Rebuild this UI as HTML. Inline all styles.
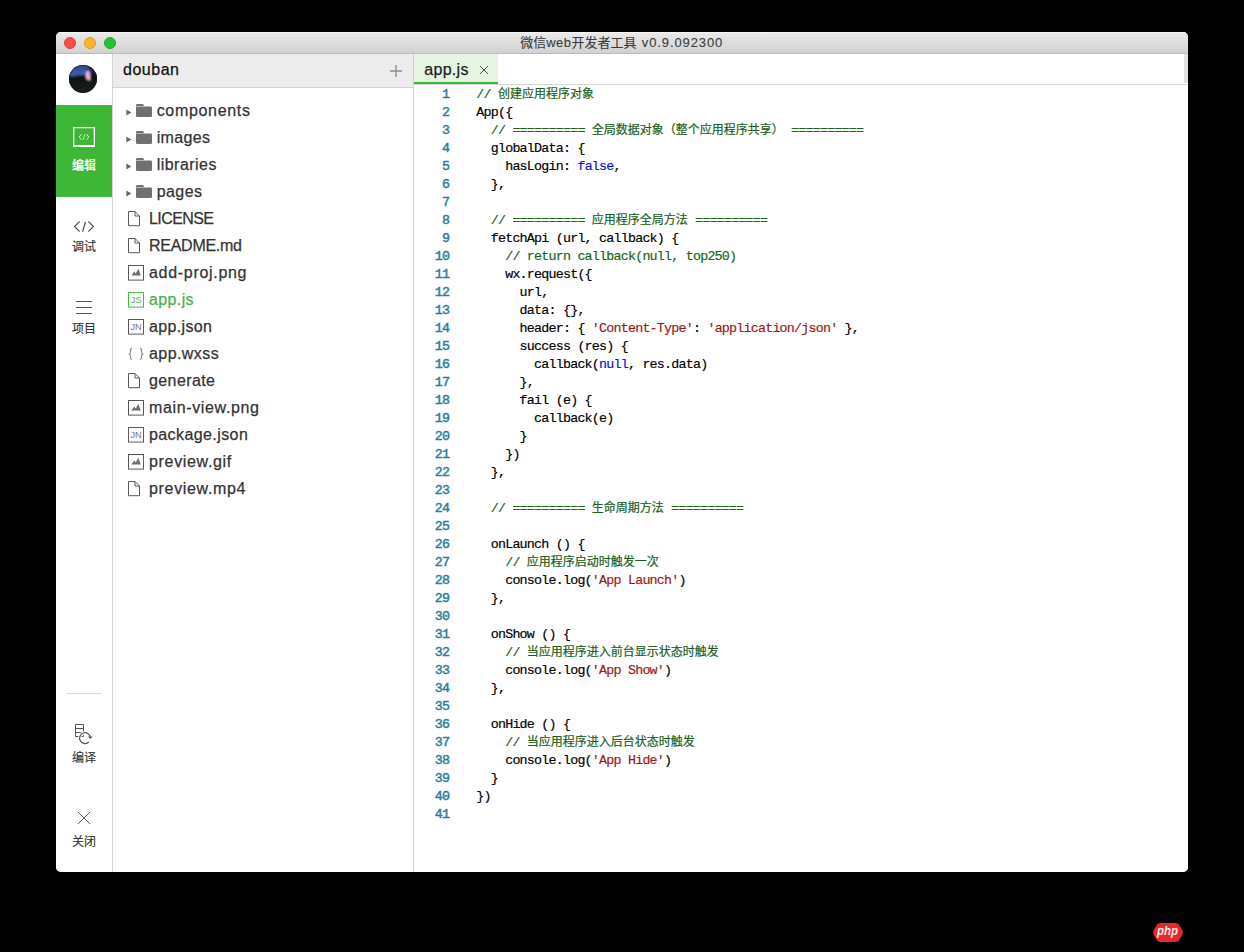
<!DOCTYPE html><html><head><meta charset="utf-8"><title>app.js</title><style>
*{box-sizing:border-box;margin:0;padding:0}
html,body{width:1244px;height:952px;background:#000;overflow:hidden}
body{position:relative;font-family:"Liberation Sans",sans-serif;color:#333}
.abs{position:absolute}
#win{position:absolute;left:56px;top:32px;width:1132px;height:840px;background:#fff;border-radius:5px;overflow:hidden}
#title{position:absolute;left:0;top:0;width:1132px;height:22px;background:linear-gradient(#ececec,#e6e6e6 15%,#d1d1d1);border-bottom:1px solid #bcbcbc;box-shadow:inset 0 1px 0 #f4f4f4}
.tl{position:absolute;top:5px;width:12px;height:12px;border-radius:50%}
#side{position:absolute;left:0;top:22px;width:56px;height:818px;background:#fff}
#sideb{position:absolute;left:56px;top:22px;width:1px;height:818px;background:#d4d4d4}
#files{position:absolute;left:57px;top:22px;width:300px;height:818px;background:#fff}
#fhead{position:absolute;left:0;top:0;width:300px;height:34px;background:#ececec;border-bottom:1px solid #d2d2d2}
#fdiv{position:absolute;left:357px;top:22px;width:1px;height:818px;background:#d0d0d0}
#ed{position:absolute;left:358px;top:22px;width:774px;height:818px;background:#fff}
.lbl{position:absolute;-webkit-text-stroke:0.25px;font-size:16px;line-height:20px;white-space:pre;color:#333}
.code{position:absolute;-webkit-text-stroke:0.18px;font-family:"Liberation Mono",monospace;white-space:pre;color:#000}
.ln{position:absolute;-webkit-text-stroke:0.45px;font-family:"Liberation Mono",monospace;white-space:pre;color:#2a7d9b;text-align:right}
.c{color:#166516}.k{color:#1010c8}.s{color:#9c1818}
.cj{display:inline-block;font-family:"Liberation Mono","Noto Sans CJK SC",monospace;font-size:12px;letter-spacing:0;color:#1b5e1b;-webkit-text-stroke:0.2px;white-space:nowrap;overflow:visible}
.tcj{display:inline-block;font-family:"Liberation Sans","Noto Sans CJK SC",sans-serif;font-size:13px;letter-spacing:0;color:#3a3a3a;white-space:nowrap}
.scj{display:block;width:24px;height:12px;font-family:"Liberation Sans","Noto Sans CJK SC",sans-serif;font-size:12px;line-height:12px;letter-spacing:0;color:#333;white-space:nowrap;-webkit-text-stroke:0.15px}
</style></head><body><div id="win"><div id="title"><div class="tl" style="left:8px;background:#fd4b48;border:0.5px solid #dc3e3a"></div><div class="tl" style="left:28px;background:#fdb425;border:0.5px solid #de9a20"></div><div class="tl" style="left:48px;background:#27c232;border:0.5px solid #1fa62a"></div><div class="abs" id="ttext" style="left:464.3px;top:3px;height:16px;line-height:16px;font-size:13px;color:#3a3a3a;-webkit-text-stroke:0.1px;white-space:nowrap"><span class="tcj" style="width:26px">微信</span><span style="letter-spacing:0.426px">web</span><span class="tcj" style="width:65px">开发者工具</span><span style="letter-spacing:0.884px;margin-left:5.4px">v0.9.092300</span></div></div><div id="side"><svg class="abs" style="left:13px;top:11px" width="28" height="28" viewBox="0 0 28 28"><defs><clipPath id="avc"><circle cx="14" cy="14" r="14"/></clipPath><filter id="avb" x="-20%" y="-20%" width="140%" height="140%"><feGaussianBlur stdDeviation="1"/></filter><linearGradient id="avs" x1="0" y1="0" x2="0" y2="1"><stop offset="0" stop-color="#2b3d88"/><stop offset="1" stop-color="#4464b4"/></linearGradient></defs><g clip-path="url(#avc)"><rect width="28" height="28" fill="#161a17"/><g filter="url(#avb)"><path d="M-2 -2H30V10L21 9.6L12 10.2L4 11L-2 11.6Z" fill="url(#avs)"/><path d="M20 -2H30V10H20.5Z" fill="#24184a"/><path d="M-2 11.6L4 11L12 10.2L21 9.6L30 10V17H-2Z" fill="#10160f"/><path d="M17.8 6C19.4 5.2 21 6.4 20.8 8.6C20.7 10.4 21.6 12.8 21 15C19.4 15.8 17.4 14.2 17 12C16.7 10 16.8 7.8 17.8 6Z" fill="#f2b8e0"/><path d="M17.6 3.6C18.8 2.6 20.8 3.2 20.6 5.4L18 6.2Z" fill="#3a1c50"/></g></g><circle cx="14" cy="14" r="13.6" fill="none" stroke="#10131a" stroke-opacity=".55" stroke-width=".9"/></svg><div class="abs" style="left:0;top:51px;width:56px;height:92px;background:#3db735"></div><svg class="abs" style="left:16px;top:72px" width="24" height="22" viewBox="0 0 24 22"><path fill-rule="evenodd" fill="#fff" d="M1 1H23V21.1H1ZM2.3 2.2V19.1H21.7V2.2Z"/><path d="M9.6 8.1L7.2 11L9.6 13.9M14.4 8.1L16.8 11L14.4 13.9M12.9 8L11.1 14" fill="none" stroke="#d6f5d0" stroke-width="1" stroke-opacity=".9"/></svg><div class="abs" style="left:16px;top:106px;height:12px;line-height:0"><span class="scj" style="color:#fff;font-weight:bold;-webkit-text-stroke:0">编辑</span></div><svg class="abs" style="left:17px;top:166px" width="22" height="14" viewBox="0 0 22 14" fill="none" stroke="#555" stroke-width="1.25"><path d="M6.6 1.4L1.6 6.5L6.6 11.6M15.4 1.4L20.4 6.5L15.4 11.6M12.5 2L9.6 11.7"/></svg><div class="abs" style="left:16px;top:187px;height:12px;line-height:0"><span class="scj">调试</span></div><div class="abs" style="left:20px;top:247px;width:16px;height:1px;background:#555"></div><div class="abs" style="left:20px;top:253px;width:16px;height:1px;background:#555"></div><div class="abs" style="left:20px;top:259px;width:16px;height:1px;background:#555"></div><div class="abs" style="left:16px;top:268.5px;height:12px;line-height:0"><span class="scj">项目</span></div><div class="abs" style="left:10px;top:639px;width:36px;height:1px;background:#dcdcdc"></div><svg class="abs" style="left:17px;top:668px" width="22" height="24" viewBox="0 0 22 24" fill="none" stroke="#555" stroke-width="1"><path d="M2.5 2.5H10.5V14.5H2.5ZM2.5 6.5H10.5M2.5 10.5H10.5"/><circle cx="12" cy="16.2" r="5.3" stroke="#fff" stroke-width="3.2"/><path d="M15.8 20A5.4 5.4 0 1 1 17.4 15.8" stroke-width="1.25"/><path d="M14.9 14.6L17.5 17L19.7 14.4Z" fill="#555" stroke="none"/></svg><div class="abs" style="left:16px;top:697.5px;height:12px;line-height:0"><span class="scj">编译</span></div><svg class="abs" style="left:21px;top:757px" width="14" height="14" viewBox="0 0 14 14" stroke="#555" stroke-width="1"><path d="M1 1L13 13M13 1L1 13"/></svg><div class="abs" style="left:16px;top:782px;height:12px;line-height:0"><span class="scj">关闭</span></div></div><div id="sideb"></div><div id="files"><div id="fhead"></div><div class="lbl" style="left:10.00px;top:5.76px;font-size:16px;letter-spacing:0.522px;color:#111">douban</div><svg class="abs" style="left:276px;top:10px" width="14" height="14" viewBox="0 0 14 14" stroke="#8a8a8a" stroke-width="1.3"><path d="M7 1V13M1 7H13"/></svg><svg class="abs" style="left:13.200000000000003px;top:54.8px" width="6" height="7" viewBox="0 0 6 7"><path d="M.3 .4L5.4 3.5L.3 6.6Z" fill="#6a6a6a"/></svg><svg class="abs" style="left:23px;top:50.0px" width="16" height="13" viewBox="0 0 16 13"><path d="M0 1.2Q0 0 1.2 0H6.3Q7.2 0 7.6 .8L8.2 2H0Z" fill="#707070"/><path d="M0 2.6H14.8Q16 2.6 16 3.8V11.8Q16 13 14.8 13H1.2Q0 13 0 11.8Z" fill="#707070"/></svg><div class="lbl" style="left:43.70px;top:46.86px;font-size:16px;letter-spacing:0.682px;color:#333">components</div><svg class="abs" style="left:13.200000000000003px;top:81.8px" width="6" height="7" viewBox="0 0 6 7"><path d="M.3 .4L5.4 3.5L.3 6.6Z" fill="#6a6a6a"/></svg><svg class="abs" style="left:23px;top:77.0px" width="16" height="13" viewBox="0 0 16 13"><path d="M0 1.2Q0 0 1.2 0H6.3Q7.2 0 7.6 .8L8.2 2H0Z" fill="#707070"/><path d="M0 2.6H14.8Q16 2.6 16 3.8V11.8Q16 13 14.8 13H1.2Q0 13 0 11.8Z" fill="#707070"/></svg><div class="lbl" style="left:43.70px;top:73.86px;font-size:16px;letter-spacing:0.364px;color:#333">images</div><svg class="abs" style="left:13.200000000000003px;top:108.8px" width="6" height="7" viewBox="0 0 6 7"><path d="M.3 .4L5.4 3.5L.3 6.6Z" fill="#6a6a6a"/></svg><svg class="abs" style="left:23px;top:104.0px" width="16" height="13" viewBox="0 0 16 13"><path d="M0 1.2Q0 0 1.2 0H6.3Q7.2 0 7.6 .8L8.2 2H0Z" fill="#707070"/><path d="M0 2.6H14.8Q16 2.6 16 3.8V11.8Q16 13 14.8 13H1.2Q0 13 0 11.8Z" fill="#707070"/></svg><div class="lbl" style="left:43.70px;top:100.86px;font-size:16px;letter-spacing:0.473px;color:#333">libraries</div><svg class="abs" style="left:13.200000000000003px;top:135.8px" width="6" height="7" viewBox="0 0 6 7"><path d="M.3 .4L5.4 3.5L.3 6.6Z" fill="#6a6a6a"/></svg><svg class="abs" style="left:23px;top:131.0px" width="16" height="13" viewBox="0 0 16 13"><path d="M0 1.2Q0 0 1.2 0H6.3Q7.2 0 7.6 .8L8.2 2H0Z" fill="#707070"/><path d="M0 2.6H14.8Q16 2.6 16 3.8V11.8Q16 13 14.8 13H1.2Q0 13 0 11.8Z" fill="#707070"/></svg><div class="lbl" style="left:43.70px;top:127.86px;font-size:16px;letter-spacing:0.426px;color:#333">pages</div><svg class="abs" style="left:15px;top:156.8px" width="12" height="16" viewBox="0 0 12 16" fill="none" stroke="#585858" stroke-width="1"><path d="M.5 .5H7L11.5 5V14.7H.5Z"/><path d="M7 .5V5H11.5"/></svg><div class="lbl" style="left:36.00px;top:154.86px;font-size:16px;letter-spacing:-0.579px;color:#333">LICENSE</div><svg class="abs" style="left:15px;top:183.8px" width="12" height="16" viewBox="0 0 12 16" fill="none" stroke="#585858" stroke-width="1"><path d="M.5 .5H7L11.5 5V14.7H.5Z"/><path d="M7 .5V5H11.5"/></svg><div class="lbl" style="left:36.00px;top:181.86px;font-size:16px;letter-spacing:-0.266px;color:#333">README.md</div><svg class="abs" style="left:15px;top:211.1px" width="16" height="16" viewBox="0 0 16 16"><rect x=".5" y=".5" width="15" height="14.6" fill="none" stroke="#585858"/><path d="M3.4 10.4L6.3 6.6L7.8 8.6L10.3 3.8L12.8 10.4Z" fill="#6e6e6e"/></svg><div class="lbl" style="left:36.00px;top:208.86px;font-size:16px;letter-spacing:0.696px;color:#333">add-proj.png</div><svg class="abs" style="left:15px;top:238.1px" width="16" height="16" viewBox="0 0 16 16"><rect x=".5" y=".5" width="15" height="14.6" fill="none" stroke="#4cb848"/><text x="8.1" y="11.1" text-anchor="middle" font-family="Liberation Sans, sans-serif" font-size="9" fill="#5ab45a" textLength="11.2" lengthAdjust="spacingAndGlyphs">JS</text></svg><div class="lbl" style="left:36.00px;top:235.86px;font-size:16px;letter-spacing:0.381px;color:#52ac52">app.js</div><svg class="abs" style="left:15px;top:265.1px" width="16" height="16" viewBox="0 0 16 16"><rect x=".5" y=".5" width="15" height="14.6" fill="none" stroke="#5a5a5a"/><text x="8.1" y="11.1" text-anchor="middle" font-family="Liberation Sans, sans-serif" font-size="9" fill="#777" textLength="11.2" lengthAdjust="spacingAndGlyphs">JN</text></svg><div class="lbl" style="left:36.00px;top:262.86px;font-size:16px;letter-spacing:0.358px;color:#333">app.json</div><svg class="abs" style="left:15px;top:294.3px" width="16" height="12" viewBox="0 0 16 12" fill="none" stroke="#858585" stroke-width="1.1"><path d="M4 .6C2.7 .6 2.5 1.2 2.5 2.2V4.3C2.5 5.2 2.1 5.7 .8 6C2.1 6.3 2.5 6.8 2.5 7.7V9.8C2.5 10.8 2.7 11.4 4 11.4M12 .6C13.3 .6 13.5 1.2 13.5 2.2V4.3C13.5 5.2 13.9 5.7 15.2 6C13.9 6.3 13.5 6.8 13.5 7.7V9.8C13.5 10.8 13.3 11.4 12 11.4"/></svg><div class="lbl" style="left:36.00px;top:289.86px;font-size:16px;letter-spacing:0.429px;color:#333">app.wxss</div><svg class="abs" style="left:15px;top:318.8px" width="12" height="16" viewBox="0 0 12 16" fill="none" stroke="#585858" stroke-width="1"><path d="M.5 .5H7L11.5 5V14.7H.5Z"/><path d="M7 .5V5H11.5"/></svg><div class="lbl" style="left:36.00px;top:316.86px;font-size:16px;letter-spacing:0.405px;color:#333">generate</div><svg class="abs" style="left:15px;top:346.1px" width="16" height="16" viewBox="0 0 16 16"><rect x=".5" y=".5" width="15" height="14.6" fill="none" stroke="#585858"/><path d="M3.4 10.4L6.3 6.6L7.8 8.6L10.3 3.8L12.8 10.4Z" fill="#6e6e6e"/></svg><div class="lbl" style="left:36.00px;top:343.86px;font-size:16px;letter-spacing:0.644px;color:#333">main-view.png</div><svg class="abs" style="left:15px;top:373.1px" width="16" height="16" viewBox="0 0 16 16"><rect x=".5" y=".5" width="15" height="14.6" fill="none" stroke="#5a5a5a"/><text x="8.1" y="11.1" text-anchor="middle" font-family="Liberation Sans, sans-serif" font-size="9" fill="#777" textLength="11.2" lengthAdjust="spacingAndGlyphs">JN</text></svg><div class="lbl" style="left:36.00px;top:370.86px;font-size:16px;letter-spacing:0.410px;color:#333">package.json</div><svg class="abs" style="left:15px;top:400.1px" width="16" height="16" viewBox="0 0 16 16"><rect x=".5" y=".5" width="15" height="14.6" fill="none" stroke="#585858"/><path d="M3.4 10.4L6.3 6.6L7.8 8.6L10.3 3.8L12.8 10.4Z" fill="#6e6e6e"/></svg><div class="lbl" style="left:36.00px;top:397.86px;font-size:16px;letter-spacing:0.670px;color:#333">preview.gif</div><svg class="abs" style="left:15px;top:426.8px" width="12" height="16" viewBox="0 0 12 16" fill="none" stroke="#585858" stroke-width="1"><path d="M.5 .5H7L11.5 5V14.7H.5Z"/><path d="M7 .5V5H11.5"/></svg><div class="lbl" style="left:36.00px;top:424.86px;font-size:16px;letter-spacing:0.668px;color:#333">preview.mp4</div></div><div id="fdiv"></div><div id="ed"><div class="abs" style="left:0;top:30px;width:774px;height:1px;background:#d6d6d6"></div><div class="abs" style="left:0;top:0;width:84px;height:30px;background:#e5f5e2;border-bottom:2px solid #3db735"></div><div class="abs" style="left:770px;top:0;width:4px;height:29px;background:#e2e2e2"></div><div class="lbl" style="left:10.20px;top:5.56px;font-size:16px;letter-spacing:0.321px;color:#222">app.js</div><svg class="abs" style="left:65px;top:11px" width="10" height="10" viewBox="0 0 10 10" stroke="#555" stroke-width="1"><path d="M1 1L9 9M9 1L1 9"/></svg><div class="ln" style="left:0;top:32.2px;width:35.22px;height:18px;line-height:18px;font-size:13.3333px;letter-spacing:-0.777px">1</div><div class="code" style="left:62.30px;top:32.2px;height:18px;line-height:18px;font-size:13.3333px;letter-spacing:-0.777px"><span class="c">// </span><span class="cj" style="width:96px">创建应用程序对象</span></div><div class="ln" style="left:0;top:50.2px;width:35.22px;height:18px;line-height:18px;font-size:13.3333px;letter-spacing:-0.777px">2</div><div class="code" style="left:62.30px;top:50.2px;height:18px;line-height:18px;font-size:13.3333px;letter-spacing:-0.777px">App({</div><div class="ln" style="left:0;top:68.2px;width:35.22px;height:18px;line-height:18px;font-size:13.3333px;letter-spacing:-0.777px">3</div><div class="code" style="left:62.30px;top:68.2px;height:18px;line-height:18px;font-size:13.3333px;letter-spacing:-0.777px"><span class="c">  // ========== </span><span class="cj" style="width:192px">全局数据对象（整个应用程序共享）</span><span class="c"> ==========</span></div><div class="ln" style="left:0;top:86.19999999999999px;width:35.22px;height:18px;line-height:18px;font-size:13.3333px;letter-spacing:-0.777px">4</div><div class="code" style="left:62.30px;top:86.19999999999999px;height:18px;line-height:18px;font-size:13.3333px;letter-spacing:-0.777px">  globalData: {</div><div class="ln" style="left:0;top:104.19999999999999px;width:35.22px;height:18px;line-height:18px;font-size:13.3333px;letter-spacing:-0.777px">5</div><div class="code" style="left:62.30px;top:104.19999999999999px;height:18px;line-height:18px;font-size:13.3333px;letter-spacing:-0.777px">    hasLogin: <span class="k">false</span>,</div><div class="ln" style="left:0;top:122.19999999999999px;width:35.22px;height:18px;line-height:18px;font-size:13.3333px;letter-spacing:-0.777px">6</div><div class="code" style="left:62.30px;top:122.19999999999999px;height:18px;line-height:18px;font-size:13.3333px;letter-spacing:-0.777px">  },</div><div class="ln" style="left:0;top:140.2px;width:35.22px;height:18px;line-height:18px;font-size:13.3333px;letter-spacing:-0.777px">7</div><div class="ln" style="left:0;top:158.2px;width:35.22px;height:18px;line-height:18px;font-size:13.3333px;letter-spacing:-0.777px">8</div><div class="code" style="left:62.30px;top:158.2px;height:18px;line-height:18px;font-size:13.3333px;letter-spacing:-0.777px"><span class="c">  // ========== </span><span class="cj" style="width:96px">应用程序全局方法</span><span class="c"> ==========</span></div><div class="ln" style="left:0;top:176.2px;width:35.22px;height:18px;line-height:18px;font-size:13.3333px;letter-spacing:-0.777px">9</div><div class="code" style="left:62.30px;top:176.2px;height:18px;line-height:18px;font-size:13.3333px;letter-spacing:-0.777px">  fetchApi (url, callback) {</div><div class="ln" style="left:0;top:194.2px;width:35.22px;height:18px;line-height:18px;font-size:13.3333px;letter-spacing:-0.777px">10</div><div class="code" style="left:62.30px;top:194.2px;height:18px;line-height:18px;font-size:13.3333px;letter-spacing:-0.777px"><span class="c">    // return callback(null, top250)</span></div><div class="ln" style="left:0;top:212.2px;width:35.22px;height:18px;line-height:18px;font-size:13.3333px;letter-spacing:-0.777px">11</div><div class="code" style="left:62.30px;top:212.2px;height:18px;line-height:18px;font-size:13.3333px;letter-spacing:-0.777px">    wx.request({</div><div class="ln" style="left:0;top:230.2px;width:35.22px;height:18px;line-height:18px;font-size:13.3333px;letter-spacing:-0.777px">12</div><div class="code" style="left:62.30px;top:230.2px;height:18px;line-height:18px;font-size:13.3333px;letter-spacing:-0.777px">      url,</div><div class="ln" style="left:0;top:248.2px;width:35.22px;height:18px;line-height:18px;font-size:13.3333px;letter-spacing:-0.777px">13</div><div class="code" style="left:62.30px;top:248.2px;height:18px;line-height:18px;font-size:13.3333px;letter-spacing:-0.777px">      data: {},</div><div class="ln" style="left:0;top:266.2px;width:35.22px;height:18px;line-height:18px;font-size:13.3333px;letter-spacing:-0.777px">14</div><div class="code" style="left:62.30px;top:266.2px;height:18px;line-height:18px;font-size:13.3333px;letter-spacing:-0.777px">      header: { <span class="s">&#x27;Content-Type&#x27;</span>: <span class="s">&#x27;application/json&#x27;</span> },</div><div class="ln" style="left:0;top:284.2px;width:35.22px;height:18px;line-height:18px;font-size:13.3333px;letter-spacing:-0.777px">15</div><div class="code" style="left:62.30px;top:284.2px;height:18px;line-height:18px;font-size:13.3333px;letter-spacing:-0.777px">      success (res) {</div><div class="ln" style="left:0;top:302.2px;width:35.22px;height:18px;line-height:18px;font-size:13.3333px;letter-spacing:-0.777px">16</div><div class="code" style="left:62.30px;top:302.2px;height:18px;line-height:18px;font-size:13.3333px;letter-spacing:-0.777px">        callback(<span class="k">null</span>, res.data)</div><div class="ln" style="left:0;top:320.2px;width:35.22px;height:18px;line-height:18px;font-size:13.3333px;letter-spacing:-0.777px">17</div><div class="code" style="left:62.30px;top:320.2px;height:18px;line-height:18px;font-size:13.3333px;letter-spacing:-0.777px">      },</div><div class="ln" style="left:0;top:338.2px;width:35.22px;height:18px;line-height:18px;font-size:13.3333px;letter-spacing:-0.777px">18</div><div class="code" style="left:62.30px;top:338.2px;height:18px;line-height:18px;font-size:13.3333px;letter-spacing:-0.777px">      fail (e) {</div><div class="ln" style="left:0;top:356.2px;width:35.22px;height:18px;line-height:18px;font-size:13.3333px;letter-spacing:-0.777px">19</div><div class="code" style="left:62.30px;top:356.2px;height:18px;line-height:18px;font-size:13.3333px;letter-spacing:-0.777px">        callback(e)</div><div class="ln" style="left:0;top:374.2px;width:35.22px;height:18px;line-height:18px;font-size:13.3333px;letter-spacing:-0.777px">20</div><div class="code" style="left:62.30px;top:374.2px;height:18px;line-height:18px;font-size:13.3333px;letter-spacing:-0.777px">      }</div><div class="ln" style="left:0;top:392.2px;width:35.22px;height:18px;line-height:18px;font-size:13.3333px;letter-spacing:-0.777px">21</div><div class="code" style="left:62.30px;top:392.2px;height:18px;line-height:18px;font-size:13.3333px;letter-spacing:-0.777px">    })</div><div class="ln" style="left:0;top:410.2px;width:35.22px;height:18px;line-height:18px;font-size:13.3333px;letter-spacing:-0.777px">22</div><div class="code" style="left:62.30px;top:410.2px;height:18px;line-height:18px;font-size:13.3333px;letter-spacing:-0.777px">  },</div><div class="ln" style="left:0;top:428.2px;width:35.22px;height:18px;line-height:18px;font-size:13.3333px;letter-spacing:-0.777px">23</div><div class="ln" style="left:0;top:446.2px;width:35.22px;height:18px;line-height:18px;font-size:13.3333px;letter-spacing:-0.777px">24</div><div class="code" style="left:62.30px;top:446.2px;height:18px;line-height:18px;font-size:13.3333px;letter-spacing:-0.777px"><span class="c">  // ========== </span><span class="cj" style="width:72px">生命周期方法</span><span class="c"> ==========</span></div><div class="ln" style="left:0;top:464.20000000000005px;width:35.22px;height:18px;line-height:18px;font-size:13.3333px;letter-spacing:-0.777px">25</div><div class="ln" style="left:0;top:482.20000000000005px;width:35.22px;height:18px;line-height:18px;font-size:13.3333px;letter-spacing:-0.777px">26</div><div class="code" style="left:62.30px;top:482.20000000000005px;height:18px;line-height:18px;font-size:13.3333px;letter-spacing:-0.777px">  onLaunch () {</div><div class="ln" style="left:0;top:500.20000000000005px;width:35.22px;height:18px;line-height:18px;font-size:13.3333px;letter-spacing:-0.777px">27</div><div class="code" style="left:62.30px;top:500.20000000000005px;height:18px;line-height:18px;font-size:13.3333px;letter-spacing:-0.777px"><span class="c">    // </span><span class="cj" style="width:132px">应用程序启动时触发一次</span></div><div class="ln" style="left:0;top:518.2px;width:35.22px;height:18px;line-height:18px;font-size:13.3333px;letter-spacing:-0.777px">28</div><div class="code" style="left:62.30px;top:518.2px;height:18px;line-height:18px;font-size:13.3333px;letter-spacing:-0.777px">    console.log(<span class="s">&#x27;App Launch&#x27;</span>)</div><div class="ln" style="left:0;top:536.2px;width:35.22px;height:18px;line-height:18px;font-size:13.3333px;letter-spacing:-0.777px">29</div><div class="code" style="left:62.30px;top:536.2px;height:18px;line-height:18px;font-size:13.3333px;letter-spacing:-0.777px">  },</div><div class="ln" style="left:0;top:554.2px;width:35.22px;height:18px;line-height:18px;font-size:13.3333px;letter-spacing:-0.777px">30</div><div class="ln" style="left:0;top:572.2px;width:35.22px;height:18px;line-height:18px;font-size:13.3333px;letter-spacing:-0.777px">31</div><div class="code" style="left:62.30px;top:572.2px;height:18px;line-height:18px;font-size:13.3333px;letter-spacing:-0.777px">  onShow () {</div><div class="ln" style="left:0;top:590.2px;width:35.22px;height:18px;line-height:18px;font-size:13.3333px;letter-spacing:-0.777px">32</div><div class="code" style="left:62.30px;top:590.2px;height:18px;line-height:18px;font-size:13.3333px;letter-spacing:-0.777px"><span class="c">    // </span><span class="cj" style="width:192px">当应用程序进入前台显示状态时触发</span></div><div class="ln" style="left:0;top:608.2px;width:35.22px;height:18px;line-height:18px;font-size:13.3333px;letter-spacing:-0.777px">33</div><div class="code" style="left:62.30px;top:608.2px;height:18px;line-height:18px;font-size:13.3333px;letter-spacing:-0.777px">    console.log(<span class="s">&#x27;App Show&#x27;</span>)</div><div class="ln" style="left:0;top:626.2px;width:35.22px;height:18px;line-height:18px;font-size:13.3333px;letter-spacing:-0.777px">34</div><div class="code" style="left:62.30px;top:626.2px;height:18px;line-height:18px;font-size:13.3333px;letter-spacing:-0.777px">  },</div><div class="ln" style="left:0;top:644.2px;width:35.22px;height:18px;line-height:18px;font-size:13.3333px;letter-spacing:-0.777px">35</div><div class="ln" style="left:0;top:662.2px;width:35.22px;height:18px;line-height:18px;font-size:13.3333px;letter-spacing:-0.777px">36</div><div class="code" style="left:62.30px;top:662.2px;height:18px;line-height:18px;font-size:13.3333px;letter-spacing:-0.777px">  onHide () {</div><div class="ln" style="left:0;top:680.2px;width:35.22px;height:18px;line-height:18px;font-size:13.3333px;letter-spacing:-0.777px">37</div><div class="code" style="left:62.30px;top:680.2px;height:18px;line-height:18px;font-size:13.3333px;letter-spacing:-0.777px"><span class="c">    // </span><span class="cj" style="width:168px">当应用程序进入后台状态时触发</span></div><div class="ln" style="left:0;top:698.2px;width:35.22px;height:18px;line-height:18px;font-size:13.3333px;letter-spacing:-0.777px">38</div><div class="code" style="left:62.30px;top:698.2px;height:18px;line-height:18px;font-size:13.3333px;letter-spacing:-0.777px">    console.log(<span class="s">&#x27;App Hide&#x27;</span>)</div><div class="ln" style="left:0;top:716.2px;width:35.22px;height:18px;line-height:18px;font-size:13.3333px;letter-spacing:-0.777px">39</div><div class="code" style="left:62.30px;top:716.2px;height:18px;line-height:18px;font-size:13.3333px;letter-spacing:-0.777px">  }</div><div class="ln" style="left:0;top:734.2px;width:35.22px;height:18px;line-height:18px;font-size:13.3333px;letter-spacing:-0.777px">40</div><div class="code" style="left:62.30px;top:734.2px;height:18px;line-height:18px;font-size:13.3333px;letter-spacing:-0.777px">})</div><div class="ln" style="left:0;top:752.2px;width:35.22px;height:18px;line-height:18px;font-size:13.3333px;letter-spacing:-0.777px">41</div></div></div><svg class="abs" style="left:1152px;top:922px" width="32" height="21" viewBox="0 0 32 21"><path d="M8.4 1H23.6Q25.6 1 26.8 2.6L30 7.6Q30.8 9 30.8 10.5Q30.8 12 30 13.4L26.8 18.4Q25.6 20 23.6 20H8.4Q6.4 20 5.2 18.4L2 13.4Q1.2 12 1.2 10.5Q1.2 9 2 7.6L5.2 2.6Q6.4 1 8.4 1Z" fill="#e8262d"/><text x="15.6" y="12.8" text-anchor="middle" font-family="Liberation Sans, sans-serif" font-style="italic" font-weight="bold" font-size="12" fill="#fdeae2" textLength="21" lengthAdjust="spacingAndGlyphs">php</text></svg></body></html>
